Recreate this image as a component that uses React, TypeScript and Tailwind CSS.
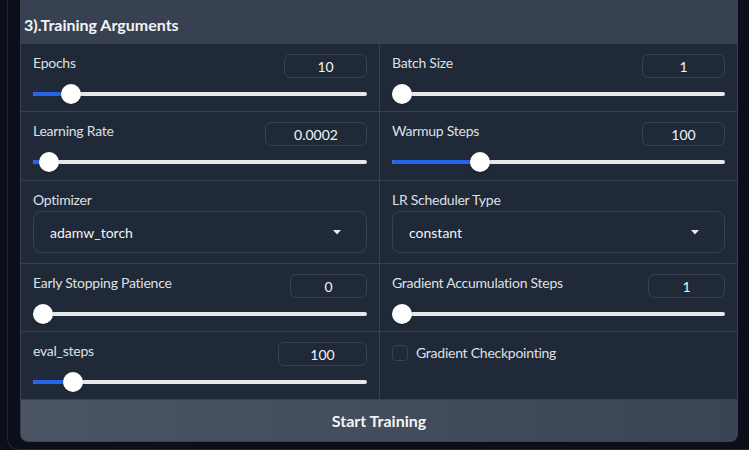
import React from "react";

const font = { fontFamily: "Lato, 'Open Sans', sans-serif" };

function NumBox({ value, w }: { value: string; w: number }) {
  return (
    <div
      className="h-6 rounded-md border border-[#374151] bg-[#1f2937] flex items-center justify-center text-[14px] text-[#f3f4f6]"
      style={{ width: w }}
    >
      {value}
    </div>
  );
}

function Slider({ pos }: { pos: number }) {
  return (
    <div className="relative h-5 mt-[6px]">
      <div className="absolute left-0 right-0 top-[8px] h-[4px] rounded-sm bg-[#e5e7eb]" />
      <div
        className="absolute left-0 top-[8px] h-[4px] rounded-l-sm bg-[#2563eb]"
        style={{ width: pos + 10 }}
      />
      <div
        className="absolute top-0 h-5 w-5 rounded-full bg-white shadow-[0_1px_2px_rgba(0,0,0,0.3)]"
        style={{ left: pos }}
      />
    </div>
  );
}

function SliderCell({
  label,
  value,
  w,
  pos,
  tall,
}: {
  label: string;
  value: string;
  w: number;
  pos: number;
  tall?: boolean;
}) {
  return (
    <div className={"bg-[#1f2937] px-3 pt-[10px] " + (tall ? "pb-[8px]" : "pb-[7px]")}>
      <div className="flex items-start justify-between">
        <span className="text-[14px] leading-[18px] tracking-[-0.25px] text-[#dde0e5]">{label}</span>
        <NumBox value={value} w={w} />
      </div>
      <Slider pos={pos} />
    </div>
  );
}

function DropCell({ label, value }: { label: string; value: string }) {
  return (
    <div className="bg-[#1f2937] px-3 pt-[10px] pb-[10px]">
      <div className="text-[14px] leading-[18px] tracking-[-0.25px] text-[#dde0e5]">{label}</div>
      <div className="mt-[2px] h-[42px] rounded-lg border border-[#374151] bg-[#1f2937] flex items-center justify-between pl-4 pr-[25px]">
        <span className="text-[14px] text-[#f3f4f6]">{value}</span>
        <svg width="8" height="5" viewBox="0 0 8 5">
          <path d="M0 0 L8 0 L4 4.5 Z" fill="#e5e7eb" />
        </svg>
      </div>
    </div>
  );
}

export default function App() {
  return (
    <div className="w-[749px] h-[450px] overflow-hidden bg-[#0b0f19]" style={font}>
      <div className="ml-[7px] w-[780px] h-[450px] border-l border-b border-[#1f2937] rounded-bl-xl bg-[#0b0f19] pl-3">
        <div className="w-[718px] rounded-b-lg border-x border-b border-[#374151] bg-[#374151] overflow-hidden">
          <div className="h-[43px] flex items-center pt-[6px] pl-[3px] text-[16px] font-bold text-[#f3f4f6]">
            3).Training Arguments
          </div>
          <div className="grid grid-cols-[358px_1fr] gap-px border-t border-[#374151] bg-[#374151]">
            <SliderCell label="Epochs" value="10" w={83} pos={28} />
            <SliderCell label="Batch Size" value="1" w={83} pos={0} />
            <SliderCell label="Learning Rate" value="0.0002" w={102} pos={6} tall />
            <SliderCell label="Warmup Steps" value="100" w={83} pos={78} tall />
            <DropCell label="Optimizer" value="adamw_torch" />
            <DropCell label="LR Scheduler Type" value="constant" />
            <SliderCell label="Early Stopping Patience" value="0" w={77} pos={0} />
            <SliderCell label="Gradient Accumulation Steps" value="1" w={77} pos={0} />
            <SliderCell label="eval_steps" value="100" w={89} pos={30} />
            <div className="bg-[#1f2937] px-3 pt-[10px]">
              <label className="flex items-center gap-2">
                <span className="h-4 w-4 rounded-[4px] border border-[#374151] bg-[#1f2937]" />
                <span className="text-[14px] tracking-[-0.25px] text-[#dde0e5]">Gradient Checkpointing</span>
              </label>
            </div>
          </div>
          <button className="w-full h-[42px] border-t border-[#374151] bg-gradient-to-r from-[#4b5563] to-[#3b4452] text-[16px] font-bold text-[#f3f4f6] flex items-center justify-center">
            Start Training
          </button>
        </div>
      </div>
    </div>
  );
}
